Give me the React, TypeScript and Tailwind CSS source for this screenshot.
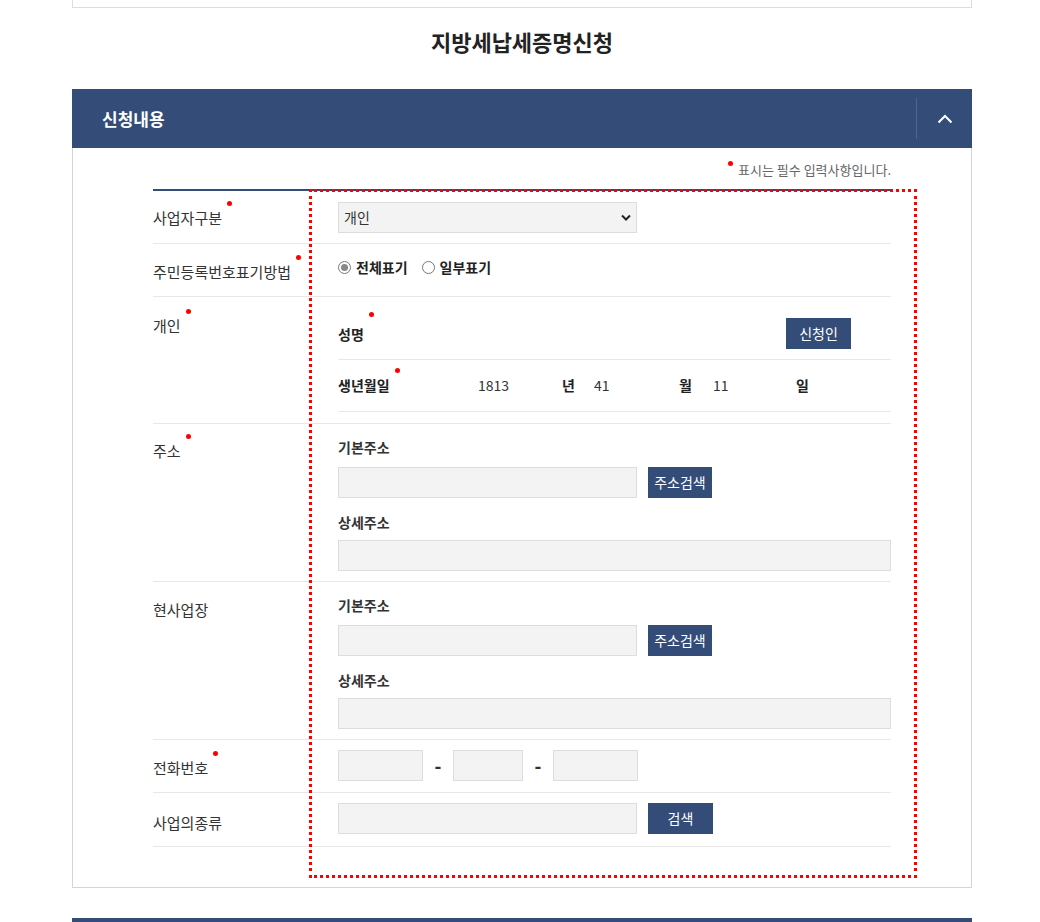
import React from "react";

const NAVY = "bg-[#344d78]";

function Dot() {
  return <span className="relative -top-[7px] ml-[5px] inline-block h-[5px] w-[5px] rounded-full bg-[#ff0000] align-top" />;
}

function Label({ text, req, pt }: { text: string; req?: boolean; pt: string }) {
  return (
    <div className={`w-[185px] shrink-0 text-[15px] leading-[20px] text-[#333] ${pt}`}>
      {text}
      {req && <Dot />}
    </div>
  );
}

function Btn({ children, w = "w-[64px]" }: { children: React.ReactNode; w?: string }) {
  return (
    <button className={`${NAVY} ${w} h-[31px] shrink-0 text-[14px] text-white`}>{children}</button>
  );
}

function Input({ w }: { w: string }) {
  return <input className={`${w} h-[31px] border border-[#dddddd] bg-[#f3f3f3] px-2 text-[14px] outline-none`} />;
}

function AddressBlock() {
  return (
    <div className="flex-1 pt-[13px] pb-[10px]">
      <div className="text-[14px] font-semibold leading-[20px] text-[#333]">기본주소</div>
      <div className="mt-[10px] flex gap-[11px]">
        <Input w="w-[299px]" />
        <Btn>주소검색</Btn>
      </div>
      <div className="mt-[14px] text-[14px] font-semibold leading-[20px] text-[#333]">상세주소</div>
      <div className="mt-[8px] flex">
        <Input w="w-full" />
      </div>
    </div>
  );
}

export default function App() {
  return (
    <div className="min-h-[922px] w-[1040px] overflow-hidden bg-white font-['Noto_Sans_CJK_KR','Noto_Sans',sans-serif] text-[#333]">
      <div className="mx-[72px] w-[900px]">
        <div className="h-[8px] border-x border-b border-[#dddddd]" />
        <h1 className="pt-[20px] pb-[35px] text-center text-[22px] font-bold leading-[26px] text-[#222]">지방세납세증명신청</h1>

        <div className={`${NAVY} flex h-[59px] items-center justify-between`}>
          <span className="pl-[30px] text-[17px] font-bold text-white">신청내용</span>
          <div className="flex h-[41px] w-[56px] items-center justify-center border-l border-[#4e6590]">
            <svg width="16" height="10" viewBox="0 0 16 10" fill="none">
              <path d="M1.5 8.5 L8 2 L14.5 8.5" stroke="white" strokeWidth="2" />
            </svg>
          </div>
        </div>

        <div className="relative border-x border-b border-[#d5d5d5] px-[80px] pb-[40px]">
          <div className="flex h-[41px] items-center justify-end pt-[2px] text-[13px] text-[#666]">
            <span className="relative -top-[6px] mr-[5px] inline-block h-[5px] w-[5px] rounded-full bg-[#ff0000]" />
            표시는 필수 입력사항입니다.
          </div>

          <div className="border-t-2 border-[#344d78]">
            {/* 사업자구분 */}
            <div className="flex border-b border-[#e8e8e8]">
              <Label text="사업자구분" req pt="pt-[17px]" />
              <div className="flex-1 pt-[11px] pb-[10px]">
                <div className="relative w-[299px]">
                  <select className="h-[31px] w-full appearance-none border border-[#dddddd] bg-[#f3f3f3] px-[5px] text-[14px] text-[#333] outline-none">
                    <option>개인</option>
                  </select>
                  <svg className="pointer-events-none absolute right-[6px] top-[12px]" width="10" height="7" viewBox="0 0 10 7">
                    <path d="M1 1.5 L5 5.5 L9 1.5" stroke="#222" strokeWidth="2" fill="none" />
                  </svg>
                </div>
              </div>
            </div>

            {/* 주민등록번호표기방법 */}
            <div className="flex h-[53px] border-b border-[#e8e8e8]">
              <Label text="주민등록번호표기방법" req pt="pt-[18px]" />
              <div className="flex flex-1 items-center gap-[14px] pb-[6px] text-[14px] font-bold text-[#222]">
                <label className="flex items-center gap-[5px]">
                  <span className="flex h-[13px] w-[13px] items-center justify-center rounded-full border border-[#777] bg-white">
                    <span className="h-[7px] w-[7px] rounded-full bg-[#888]" />
                  </span>
                  전체표기
                </label>
                <label className="flex items-center gap-[5px]">
                  <span className="h-[13px] w-[13px] rounded-full border border-[#777] bg-white" />
                  일부표기
                </label>
              </div>
            </div>

            {/* 개인 */}
            <div className="flex border-b border-[#e8e8e8]">
              <Label text="개인" req pt="pt-[19px]" />
              <div className="flex-1 pb-[11px]">
                <div className="flex items-center justify-between border-b border-[#e8e8e8] pt-[21px] pb-[10px] pr-[40px]">
                  <span className="text-[14px] font-semibold leading-[30px] text-[#222]">
                    성명<Dot />
                  </span>
                  <Btn w="w-[65px]">신청인</Btn>
                </div>
                <div className="flex h-[52px] items-center border-b border-[#e8e8e8] text-[14px] text-[#333]">
                  <span className="w-[140px] font-semibold text-[#222]">
                    생년월일<Dot />
                  </span>
                  <span className="w-[84px] font-normal">1813</span>
                  <span className="w-[32px] font-semibold text-[#222]">년</span>
                  <span className="w-[85px] font-normal">41</span>
                  <span className="w-[34px] font-semibold text-[#222]">월</span>
                  <span className="w-[83px] font-normal">11</span>
                  <span className="font-semibold text-[#222]">일</span>
                </div>
              </div>
            </div>

            {/* 주소 */}
            <div className="flex border-b border-[#e8e8e8]">
              <Label text="주소" req pt="pt-[17px]" />
              <AddressBlock />
            </div>

            {/* 현사업장 */}
            <div className="flex border-b border-[#e8e8e8]">
              <Label text="현사업장" pt="pt-[18px]" />
              <AddressBlock />
            </div>

            {/* 전화번호 */}
            <div className="flex border-b border-[#e8e8e8]">
              <Label text="전화번호" req pt="pt-[18px]" />
              <div className="flex flex-1 items-center pt-[10px] pb-[11px] text-[18px] font-black text-[#333]">
                <Input w="w-[85px]" />
                <span className="w-[30px] text-center">-</span>
                <Input w="w-[70px]" />
                <span className="w-[30px] text-center">-</span>
                <Input w="w-[85px]" />
              </div>
            </div>

            {/* 사업의종류 */}
            <div className="flex border-b border-[#e8e8e8]">
              <Label text="사업의종류" pt="pt-[20px]" />
              <div className="flex flex-1 gap-[11px] pt-[10px] pb-[12px]">
                <Input w="w-[299px]" />
                <Btn w="w-[65px]">검색</Btn>
              </div>
            </div>
          </div>

          <div className="pointer-events-none absolute left-[236px] top-[41px] h-[689px] w-[608px] border-[3px] border-dotted border-[#ff0000]" />
        </div>

        <div className={`${NAVY} mt-[30px] h-[10px]`} />
      </div>
    </div>
  );
}
